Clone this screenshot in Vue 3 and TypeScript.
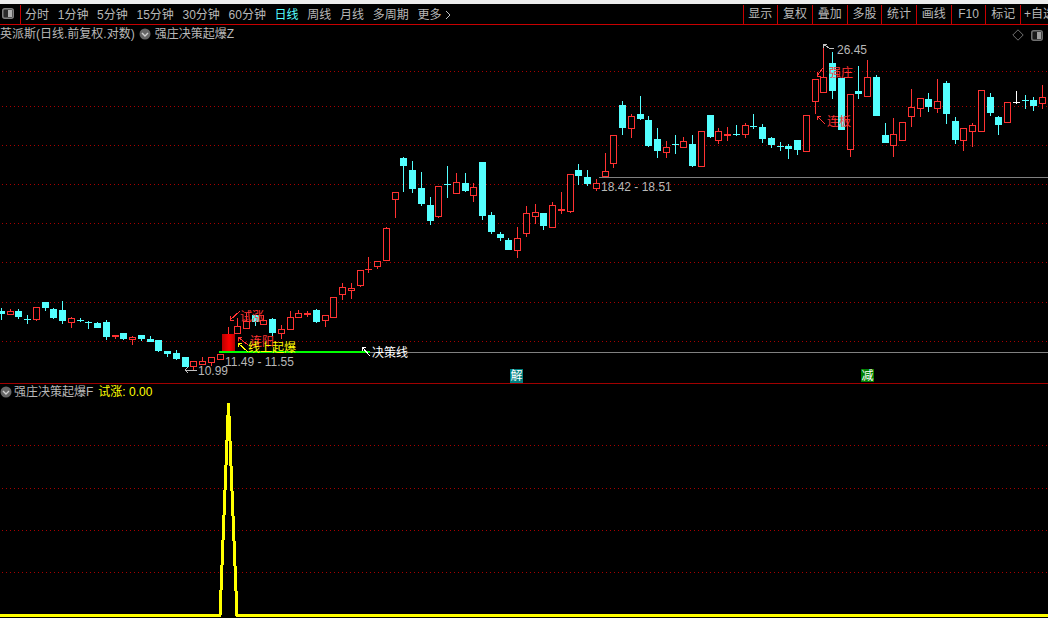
<script setup lang="ts">
import { computed } from 'vue';

type Candle = [string, number, number, number, number];

const R = 'r';
const C = 'c';
const W = 'w';

// [colour, wick top, body top, body bottom, wick bottom] in page pixels
const rows: Candle[] = [
    [C, 308, 311, 314, 320], [R, 309, 311, 315, 315], [C, 309, 311, 317, 319], [C, 315, 319, 320, 324],
    [R, 307, 307, 320, 321], [C, 302, 302, 308, 311], [C, 308, 309, 318, 319], [C, 301, 310, 321, 324],
    [R, 317, 318, 323, 328], [C, 318, 320, 321, 322], [C, 321, 322, 323, 329], [C, 322, 323, 328, 328],
    [C, 320, 322, 337, 340], [R, 335, 335, 337, 339], [C, 333, 333, 339, 340], [R, 336, 337, 340, 345],
    [C, 335, 335, 339, 341], [C, 336, 339, 342, 342], [C, 340, 340, 351, 352], [C, 351, 351, 354, 357],
    [C, 350, 353, 359, 360], [C, 357, 357, 367, 367], [R, 361, 361, 367, 370], [R, 357, 361, 365, 365],
    [R, 357, 357, 363, 366], [R, 354, 354, 360, 360], [R, 327, 334, 351, 351], [R, 318, 326, 334, 334],
    [R, 313, 321, 329, 329], [C, 315, 315, 322, 326], [R, 315, 320, 325, 325], [C, 318, 319, 333, 336],
    [R, 325, 329, 334, 339], [R, 311, 317, 330, 330], [R, 310, 313, 318, 318], [R, 311, 313, 315, 317],
    [C, 309, 310, 322, 323], [R, 315, 315, 321, 327], [R, 297, 297, 318, 318], [R, 283, 287, 295, 300],
    [R, 283, 288, 291, 299], [R, 270, 270, 286, 287], [R, 257, 269, 270, 273], [R, 261, 261, 267, 269],
    [R, 227, 228, 261, 261], [R, 192, 192, 200, 218], [C, 157, 158, 166, 192], [C, 161, 170, 189, 193],
    [C, 172, 188, 204, 206], [C, 197, 205, 221, 225], [R, 186, 186, 217, 218], [C, 166, 184, 185, 198],
    [R, 173, 182, 194, 194], [C, 173, 183, 191, 192], [R, 183, 187, 196, 202], [C, 162, 162, 216, 220],
    [C, 212, 215, 232, 234], [C, 232, 234, 238, 241], [C, 238, 240, 250, 250], [R, 227, 238, 251, 258],
    [R, 206, 213, 234, 237], [R, 204, 212, 217, 224], [C, 213, 213, 226, 230], [R, 202, 205, 228, 228],
    [R, 192, 209, 211, 214], [R, 174, 174, 212, 213], [C, 164, 170, 176, 185], [C, 170, 177, 184, 186],
    [R, 179, 183, 189, 191], [R, 153, 171, 177, 177], [R, 135, 135, 164, 168], [C, 101, 105, 128, 135],
    [R, 114, 116, 129, 138], [C, 96, 114, 119, 120], [C, 116, 120, 146, 147], [C, 128, 139, 151, 158],
    [R, 141, 147, 153, 158], [C, 135, 144, 145, 154], [R, 137, 141, 148, 148], [C, 135, 144, 166, 167],
    [R, 131, 131, 167, 167], [C, 115, 115, 137, 138], [R, 128, 131, 141, 144], [R, 127, 134, 136, 141],
    [C, 125, 134, 135, 136], [R, 123, 125, 135, 138], [C, 114, 126, 127, 129], [C, 124, 127, 139, 143],
    [C, 137, 138, 145, 148], [C, 142, 146, 147, 151], [C, 144, 146, 149, 159], [C, 140, 140, 150, 155],
    [R, 115, 115, 152, 152], [R, 79, 79, 102, 114], [R, 45, 77, 93, 93], [C, 52, 63, 91, 99],
    [C, 78, 78, 130, 130], [R, 94, 94, 150, 157], [C, 66, 91, 94, 99], [R, 60, 77, 97, 97],
    [C, 75, 77, 116, 116], [C, 123, 135, 143, 143], [R, 118, 134, 146, 157], [R, 122, 122, 141, 141],
    [R, 89, 107, 117, 127], [R, 98, 98, 109, 117], [C, 93, 99, 107, 112], [R, 79, 101, 109, 113],
    [C, 81, 83, 114, 124], [C, 117, 121, 140, 144], [R, 128, 128, 141, 151], [R, 123, 125, 132, 147],
    [R, 90, 90, 132, 132], [C, 93, 97, 113, 116], [C, 116, 117, 125, 135], [R, 102, 102, 123, 123],
    [W, 91, 102, 103, 104], [C, 95, 100, 101, 109], [C, 97, 100, 106, 111], [R, 85, 97, 104, 109],
];

const candles = computed(() => rows.map((row, i) => ({
    x: Math.ceil(1 + i * 8.75 - 0.5),
    kind: row[0],
    wickTop: row[1],
    top: row[2],
    height: row[3] - row[2],
    wickHeight: row[4] - row[1],
})));

const upperGrid = [71, 106, 145, 184, 223, 262, 302, 341];
const lowerGrid = [445, 488, 530, 572];

const periods = ['分时', '1分钟', '5分钟', '15分钟', '30分钟', '60分钟', '日线', '周线', '月线', '多周期', '更多'];
const tools = ['显示', '复权', '叠加', '多股', '统计', '画线', 'F10', '标记'];

const arrows = [
    { d: 'M823 44V48M823 44H827M823 44L829 48H834', color: '#c0c0c0' },
    { d: 'M823 68L817 76M817 76H821M817 76V72', color: '#ff3232' },
    { d: 'M817 116L825 124M817 116H821M817 116V120', color: '#ff3232' },
    { d: 'M240 311L230 320M230 320H234M230 320V316', color: '#ff3232' },
    { d: 'M238 337L248 345M238 337H242M238 337V341', color: '#ff3232' },
    { d: 'M238 343L248 352M238 343H242M238 343V347', color: '#ffff00' },
    { d: 'M362 347L370 356M362 347H366M362 347V351', color: '#ffffff' },
    { d: 'M185 370H197M185 370L188 367M185 370L188 373', color: '#c0c0c0' },
];
</script>

<template>
    <div class="screen">
        <div class="strip"></div>

        <div class="toolbar">
            <svg class="panel-icon" width="12" height="11" viewBox="0 0 12 11">
                <rect x="0.75" y="0.75" width="10.5" height="9.5" rx="2" fill="#2a2a2a" stroke="#808080" stroke-width="1.5" />
                <rect x="6" y="2" width="4" height="7" fill="#b0b0b0" />
            </svg>
            <div class="periods">
                <span v-for="p in periods" :key="p" :class="{ active: p === '日线' }">{{ p }}</span>
                <svg width="6" height="10" viewBox="0 0 6 10" class="more">
                    <path d="M1 1L5 5L1 9" fill="none" stroke="#c0c0c0" />
                </svg>
            </div>
            <div class="tools">
                <span v-for="t in tools" :key="t" class="tool">{{ t }}</span>
                <span class="tool tool-last">+自选</span>
            </div>
        </div>

        <div class="pane pane-main">
            <div class="legend">
                <span>英派斯(日线.前复权.对数)</span>
                <svg class="chevron" width="12" height="12" viewBox="0 0 12 12">
                    <circle cx="6" cy="6" r="5.5" fill="#666" />
                    <path d="M3 5L6 8L9 5" fill="none" stroke="#d0d0d0" stroke-width="1.4" />
                </svg>
                <span>强庄决策起爆Z</span>
            </div>
            <div class="corner">
                <svg width="12" height="12" viewBox="0 0 12 12">
                    <path d="M6 .8L11.2 6L6 11.2L.8 6Z" fill="none" stroke="#707070" />
                </svg>
                <svg width="12" height="11" viewBox="0 0 12 11">
                    <rect x="0.75" y="0.75" width="10.5" height="9.5" rx="2" fill="#1a1a1a" stroke="#707070" stroke-width="1.5" />
                    <rect x="6" y="2" width="4" height="7" fill="#a0a0a0" />
                </svg>
            </div>

            <svg class="chart" width="1048" height="358" viewBox="0 25 1048 358">
                <defs>
                    <linearGradient id="burst" x1="0" x2="1" y1="0" y2="0">
                        <stop offset="0" stop-color="#b80000" />
                        <stop offset="0.55" stop-color="#ff0000" />
                        <stop offset="1" stop-color="#b80000" />
                    </linearGradient>
                </defs>
                <g class="crisp">
                    <line v-for="y in upperGrid" :key="y" class="grid" x1="2" x2="1048" :y1="y + 0.5" :y2="y + 0.5" />
                    <rect x="599" y="177" width="449" height="1" fill="#808080" />
                    <rect x="370" y="352" width="678" height="1" fill="#808080" />

                    <g v-for="c in candles" :key="c.x" :class="c.kind">
                        <rect class="wick" :x="c.x" :y="c.wickTop" width="1" :height="c.wickHeight" />
                        <rect v-if="c.kind === 'r' && c.height > 2" class="hollow" :x="c.x - 2.5" :y="c.top + 0.5" width="6"
                            :height="c.height - 1" />
                        <rect v-else class="solid" :x="c.x - 3" :y="c.top" width="7" :height="c.height" />
                    </g>

                    <rect x="222" y="334" width="13" height="17" fill="url(#burst)" />
                    <rect x="219" y="351" width="151" height="2" fill="#00ff00" />
                    <path v-for="a in arrows" :key="a.d" :d="a.d" fill="none" :stroke="a.color" />
                </g>

                <text class="num" x="837" y="54">26.45</text>
                <text class="label red" x="829" y="77">强庄</text>
                <text class="label red" x="827" y="126">连板</text>
                <text class="label red" x="240" y="321">试涨</text>
                <text class="label red" x="250" y="346">连阳</text>
                <text class="label yellow" x="248" y="352">线上起爆</text>
                <text class="label white" x="372" y="357">决策线</text>
                <text class="num" x="225" y="366">11.49 - 11.55</text>
                <text class="num" x="198" y="375">10.99</text>
                <text class="num" x="601" y="191">18.42 - 18.51</text>

                <rect x="510" y="369" width="13" height="14" fill="#008080" />
                <text class="label white" x="510.5" y="380">解</text>
                <rect x="861" y="369" width="13" height="13" fill="#008000" />
                <text class="label white" x="861.5" y="380">减</text>
            </svg>
        </div>

        <div class="pane pane-sub">
            <div class="legend legend-sub">
                <svg class="chevron" width="12" height="12" viewBox="0 0 12 12">
                    <circle cx="6" cy="6" r="5.5" fill="#666" />
                    <path d="M3 5L6 8L9 5" fill="none" stroke="#d0d0d0" stroke-width="1.4" />
                </svg>
                <span>强庄决策起爆F</span>
                <span class="value">试涨: 0.00</span>
            </div>
            <svg class="chart" width="1048" height="234" viewBox="0 384 1048 234">
                <g class="crisp">
                    <line v-for="y in lowerGrid" :key="y" class="grid" x1="2" x2="1048" :y1="y + 0.5" :y2="y + 0.5" />
                    <path d="M0 615.5H220L228.5 403L237 615.5H1048" fill="none" stroke="#ffff00" stroke-width="3"
                        stroke-linejoin="bevel" />
                </g>
            </svg>
        </div>
    </div>
</template>

<style scoped>
.screen {
    width: 1048px;
    height: 618px;
    overflow: hidden;
    background: #000;
    color: #b8b8b8;
    font: 12px/14px "Liberation Sans", "Noto Sans CJK SC", sans-serif;
}

.strip {
    height: 4px;
    background: #ececec;
}

.toolbar {
    display: flex;
    align-items: stretch;
    height: 20px;
    border-bottom: 1px solid #c80000;
    overflow: hidden;
}

.panel-icon {
    flex: none;
    margin: 4px 6px 0 2px;
}

.periods {
    display: flex;
    align-items: center;
    gap: 8.7px;
    margin-top: 1px;
    padding-left: 4px;
    border-left: 1px solid #c80000;
    flex: 1;
}

.periods span {
    white-space: nowrap;
}

.periods .active {
    color: #54ffff;
}

.more {
    margin-left: -5px;
}

.tools {
    display: flex;
    flex: none;
    padding-top: 1px;
}

.tool {
    width: 34.7px;
    height: 19px;
    box-sizing: border-box;
    border-left: 1px solid #c80000;
    line-height: 19px;
    text-align: center;
    white-space: nowrap;
}

.tool-last {
    width: 28px;
    padding-left: 3px;
    text-align: left;
    overflow: hidden;
}

.pane {
    position: relative;
}

.pane-main {
    height: 358px;
    border-bottom: 1px solid #a00000;
}

.pane-sub {
    height: 234px;
}

.chart {
    display: block;
}

.legend {
    position: absolute;
    top: 2px;
    left: 0;
    display: flex;
    align-items: center;
    gap: 4px;
    height: 14px;
    white-space: nowrap;
}

.legend-sub {
    top: 1px;
    gap: 2px;
}

.value {
    margin-left: 3px;
    color: #ffff00;
}

.chevron {
    flex: none;
}

.corner {
    position: absolute;
    top: 4px;
    right: 5px;
    display: flex;
    align-items: center;
    gap: 7px;
}

.crisp {
    shape-rendering: crispEdges;
}

.grid {
    stroke: #a80000;
    stroke-dasharray: 1 3;
}

.r .wick,
.r .solid {
    fill: #ff3232;
}

.hollow {
    fill: #000;
    stroke: #ff3232;
}

.c .wick,
.c .solid {
    fill: #54ffff;
}

.w .wick,
.w .solid {
    fill: #fff;
}

.num {
    fill: #b8b8b8;
    font: 12px "Liberation Sans", sans-serif;
}

.label {
    font: 12px "Noto Sans CJK SC", sans-serif;
}

.red {
    fill: #ff3232;
}

.yellow {
    fill: #ffff00;
}

.white {
    fill: #fff;
}
</style>
